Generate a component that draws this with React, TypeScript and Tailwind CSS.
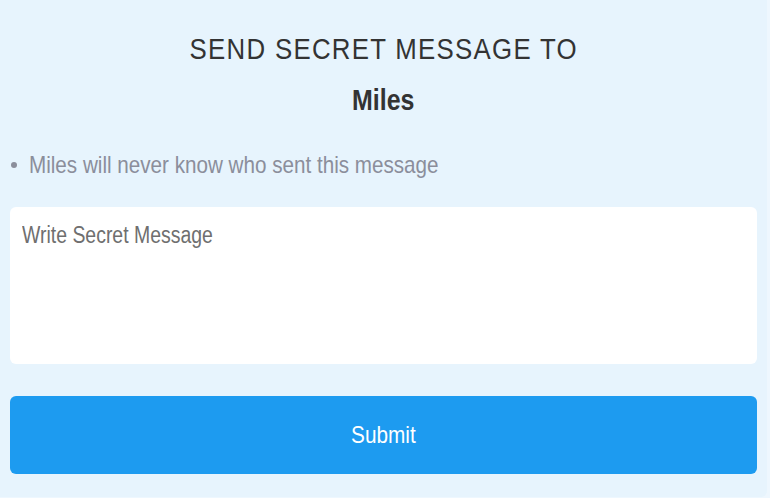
import React from "react";

export default function App() {
  const font = { fontFamily: '"Liberation Sans", Arial, sans-serif' };
  return (
    <div className="w-[770px] h-[498px] bg-[#eef7fe] overflow-hidden" style={font}>
      <div className="w-[767px] h-[497px] bg-[#e7f4fd] rounded-br-[6px] pt-[31px] px-[10px] flex flex-col">
        <div className="flex flex-col items-center">
          <div className="text-[30px] leading-[36px] tracking-[1.5px] text-[#333333]">
            <span className="inline-block scale-x-[0.86]">SEND SECRET MESSAGE TO</span>
          </div>
          <div className="mt-[16px] text-[29px] leading-[34px] font-bold text-[#333333]">
            <span className="inline-block scale-x-[0.86]">Miles</span>
          </div>
        </div>
        <div className="mt-[33px] flex items-center h-[30px]">
          <span className="w-[6px] h-[6px] rounded-full bg-[#8b8e9b] ml-[1px] shrink-0" />
          <span className="ml-[12px] text-[24px] text-[#8b8e9b] leading-[30px] inline-block origin-left scale-x-[0.86] whitespace-nowrap">
            Miles will never know who sent this message
          </span>
        </div>
        <div className="relative mt-[27px] w-[747px] h-[157px]">
          <textarea
            className="w-full h-full bg-white rounded-[6px] px-[12px] pt-[14px] text-[23px] leading-[28px] text-[#333] outline-none resize-none block"
            style={font}
            aria-label="Write Secret Message"
          />
          <span className="pointer-events-none absolute left-[12px] top-[14px] text-[23px] leading-[28px] text-[#6f6f6f] inline-block origin-left scale-x-[0.845] whitespace-nowrap">
            Write Secret Message
          </span>
        </div>
        <button
          className="mt-[32px] w-[747px] h-[78px] bg-[#1d9bf0] rounded-[6px] text-white text-[24px]"
          style={font}
        >
          <span className="inline-block scale-x-[0.865]">Submit</span>
        </button>
      </div>
    </div>
  );
}
